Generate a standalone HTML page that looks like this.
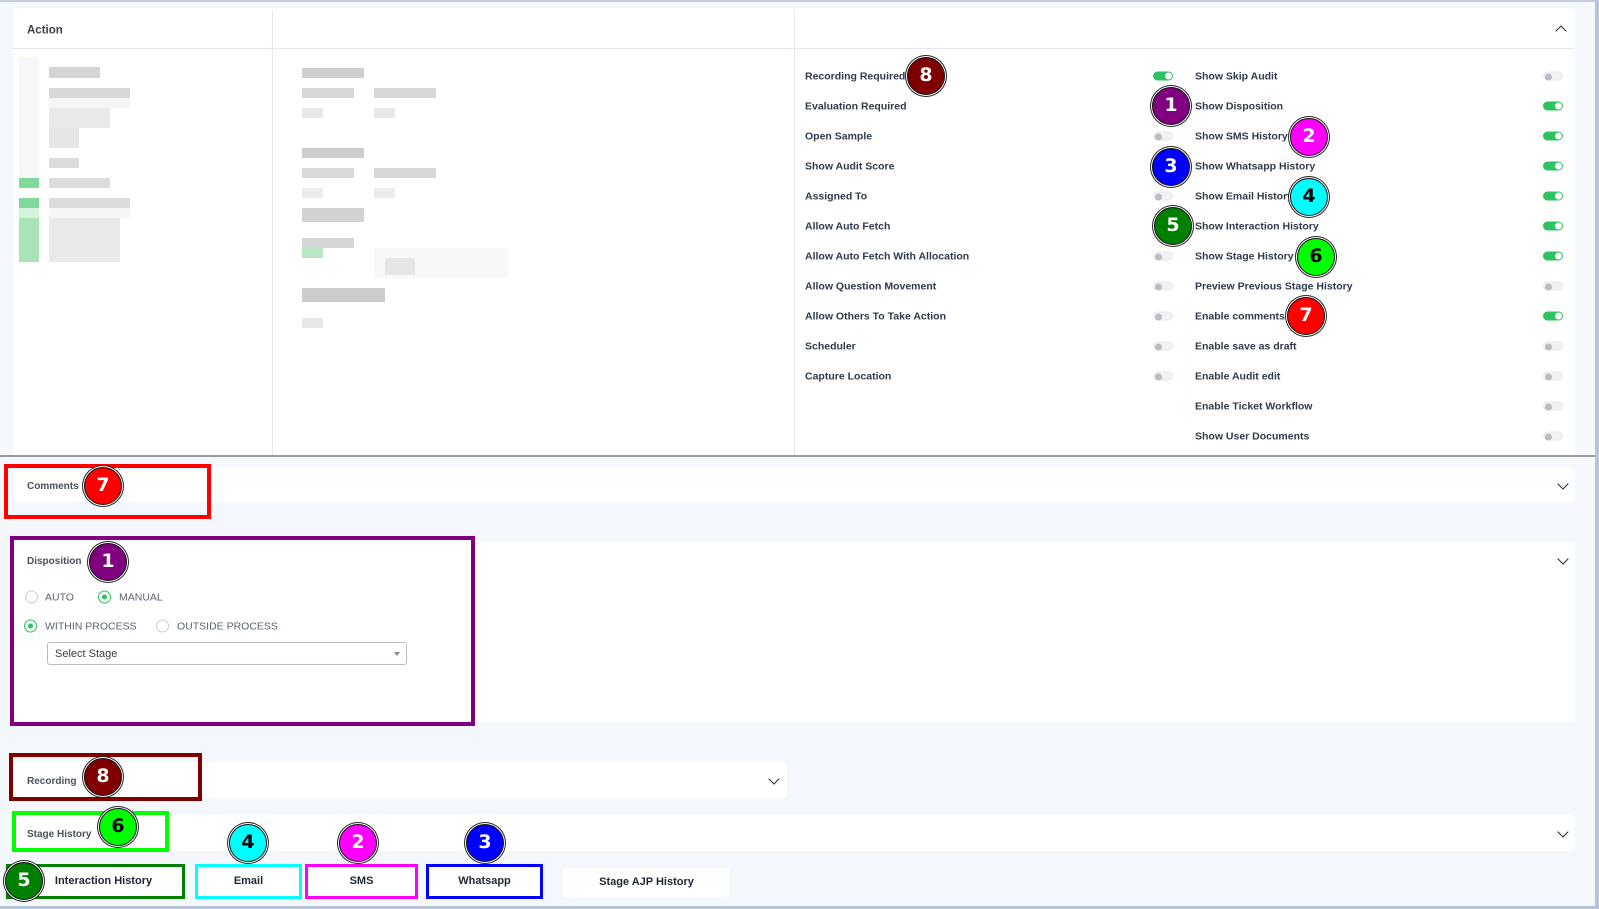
<!DOCTYPE html>
<html><head><meta charset="utf-8"><style>
*{margin:0;padding:0;box-sizing:border-box}
body{width:1599px;height:909px;background:#f4f7fb;position:relative;overflow:hidden;font-family:"Liberation Sans",sans-serif;color:#2f3a4a}
.a{position:absolute}
.card{position:absolute;background:#fff;border-radius:3px}
.lbl{position:absolute;font-size:10.5px;font-weight:bold;color:#2f3a4a;transform:translateY(-45%);white-space:nowrap}
.tg{position:absolute;width:20px;height:9px;border-radius:5px;transform:translateY(-50%)}
.tg.off{background:#f1f2f4;border:1px solid #e6e8eb}
.tg.off::after{content:"";position:absolute;left:1px;top:0.5px;width:7px;height:7px;border-radius:50%;background:#b9bcc1}
.tg.on{background:#2ec260}
.tg.on::after{content:"";position:absolute;right:1px;top:1px;width:7px;height:7px;border-radius:50%;background:#fff}
.b{position:absolute;width:38px;height:38px;border-radius:50%;border:1.5px solid #111;box-shadow:0 0 0 1px #fff,0 0 0 2px #222;transform:translate(-50%,-50%);color:#fff;font-weight:bold;font-size:19px;text-align:center;line-height:35px;font-family:"DejaVu Sans",sans-serif}
.bx{position:absolute;border:4px solid}
.g{position:absolute}
.chev{position:absolute;width:8px;height:8px;border-left:1.4px solid #222;border-top:1.4px solid #222}
.rad{position:absolute;width:13px;height:13px;border-radius:50%;border:1px solid #c8cdd5;transform:translateY(-50%);background:#fff}
.rad.on{border-color:#2ec260}
.rad.on::after{content:"";position:absolute;left:3px;top:3px;width:5px;height:5px;border-radius:50%;background:#2ec260}
.rt{position:absolute;font-size:10.5px;color:#5a6170;transform:translateY(-45%)}
.btn{position:absolute;background:#fff;font-size:11px;font-weight:bold;color:#1f2633;text-align:center;line-height:35px;height:35px}
</style></head><body>
<div class="a" style="left:0;top:0;width:1599px;height:2px;background:#c5cde0"></div>
<div class="a" style="left:1595px;top:0;width:4px;height:909px;background:#b8c4d8"></div>

<div class="card" style="left:13px;top:8px;width:1562px;height:448px;border-radius:3px 3px 0 0"></div>
<div class="a" style="left:0;top:455px;width:1595px;height:2px;background:#9a9a9a"></div>
<div class="a" style="left:13px;top:48px;width:1562px;height:1px;background:#e5e8ee"></div>
<div class="a" style="left:272px;top:11px;width:1px;height:444px;background:#e5e8ee"></div>
<div class="a" style="left:794px;top:11px;width:1px;height:444px;background:#e5e8ee"></div>
<div class="lbl" style="left:27px;top:30px;font-size:11.5px;color:#3a3f48">Action</div>
<div class="chev" style="left:1557px;top:27px;transform:rotate(45deg)"></div>

<div class="g" style="left:19px;top:57px;width:20px;height:121px;background:#f6f7f9"></div>
<div class="g" style="left:49px;top:67px;width:51px;height:11px;background:#d4d4d4"></div>
<div class="g" style="left:49px;top:88px;width:81px;height:10px;background:#d8d8d8"></div>
<div class="g" style="left:49px;top:98px;width:81px;height:10px;background:#f5f5f5"></div>
<div class="g" style="left:49px;top:108px;width:61px;height:20px;background:#eaeaea"></div>
<div class="g" style="left:49px;top:128px;width:30px;height:20px;background:#e6e6e6"></div>
<div class="g" style="left:49px;top:158px;width:30px;height:10px;background:#dcdcdc"></div>
<div class="g" style="left:49px;top:178px;width:61px;height:10px;background:#dcdcdc"></div>
<div class="g" style="left:49px;top:198px;width:81px;height:10px;background:#dcdcdc"></div>
<div class="g" style="left:49px;top:208px;width:81px;height:10px;background:#f6f6f6"></div>
<div class="g" style="left:49px;top:218px;width:71px;height:44px;background:#eaeaea"></div>
<div class="g" style="left:19px;top:178px;width:20px;height:10px;background:#7fd99a"></div>
<div class="g" style="left:19px;top:198px;width:20px;height:10px;background:#7fd99a"></div>
<div class="g" style="left:19px;top:208px;width:20px;height:10px;background:#d6f2dd"></div>
<div class="g" style="left:19px;top:218px;width:20px;height:44px;background:#a9e3b8"></div>
<div class="g" style="left:302px;top:68px;width:62px;height:10px;background:#cfcfcf"></div>
<div class="g" style="left:302px;top:88px;width:52px;height:10px;background:#d8d8d8"></div>
<div class="g" style="left:374px;top:88px;width:62px;height:10px;background:#d8d8d8"></div>
<div class="g" style="left:302px;top:108px;width:21px;height:10px;background:#e8e8e8"></div>
<div class="g" style="left:374px;top:108px;width:21px;height:10px;background:#e8e8e8"></div>
<div class="g" style="left:302px;top:148px;width:62px;height:10px;background:#cdcdcd"></div>
<div class="g" style="left:302px;top:168px;width:52px;height:10px;background:#dadada"></div>
<div class="g" style="left:374px;top:168px;width:62px;height:10px;background:#d8d8d8"></div>
<div class="g" style="left:302px;top:188px;width:21px;height:10px;background:#ececec"></div>
<div class="g" style="left:374px;top:188px;width:21px;height:10px;background:#ececec"></div>
<div class="g" style="left:302px;top:208px;width:62px;height:14px;background:#d2d2d2"></div>
<div class="g" style="left:302px;top:238px;width:52px;height:10px;background:#d6d6d6"></div>
<div class="g" style="left:302px;top:248px;width:21px;height:10px;background:#b8e8c4"></div>
<div class="g" style="left:374px;top:248px;width:134px;height:30px;background:#f7f8fa"></div>
<div class="g" style="left:385px;top:258px;width:30px;height:17px;background:#e6e6e6"></div>
<div class="g" style="left:302px;top:288px;width:83px;height:14px;background:#cccccc"></div>
<div class="g" style="left:302px;top:318px;width:21px;height:10px;background:#e8e8e8"></div>

<div class="lbl" style="left:805px;top:76px">Recording Required</div>
<div class="lbl" style="left:805px;top:106px">Evaluation Required</div>
<div class="lbl" style="left:805px;top:136px">Open Sample</div>
<div class="lbl" style="left:805px;top:166px">Show Audit Score</div>
<div class="lbl" style="left:805px;top:196px">Assigned To</div>
<div class="lbl" style="left:805px;top:226px">Allow Auto Fetch</div>
<div class="lbl" style="left:805px;top:256px">Allow Auto Fetch With Allocation</div>
<div class="lbl" style="left:805px;top:286px">Allow Question Movement</div>
<div class="lbl" style="left:805px;top:316px">Allow Others To Take Action</div>
<div class="lbl" style="left:805px;top:346px">Scheduler</div>
<div class="lbl" style="left:805px;top:376px">Capture Location</div>
<div class="tg on" style="left:1153px;top:76px"></div>
<div class="tg off" style="left:1153px;top:136px"></div>
<div class="tg off" style="left:1153px;top:196px"></div>
<div class="tg off" style="left:1153px;top:256px"></div>
<div class="tg off" style="left:1153px;top:286px"></div>
<div class="tg off" style="left:1153px;top:316px"></div>
<div class="tg off" style="left:1153px;top:346px"></div>
<div class="tg off" style="left:1153px;top:376px"></div>

<div class="lbl" style="left:1195px;top:76px">Show Skip Audit</div>
<div class="lbl" style="left:1195px;top:106px">Show Disposition</div>
<div class="lbl" style="left:1195px;top:136px">Show SMS History</div>
<div class="lbl" style="left:1195px;top:166px">Show Whatsapp History</div>
<div class="lbl" style="left:1195px;top:196px">Show Email History</div>
<div class="lbl" style="left:1195px;top:226px">Show Interaction History</div>
<div class="lbl" style="left:1195px;top:256px">Show Stage History</div>
<div class="lbl" style="left:1195px;top:286px">Preview Previous Stage History</div>
<div class="lbl" style="left:1195px;top:316px">Enable comments</div>
<div class="lbl" style="left:1195px;top:346px">Enable save as draft</div>
<div class="lbl" style="left:1195px;top:376px">Enable Audit edit</div>
<div class="lbl" style="left:1195px;top:406px">Enable Ticket Workflow</div>
<div class="lbl" style="left:1195px;top:436px">Show User Documents</div>
<div class="tg off" style="left:1543px;top:76px"></div>
<div class="tg on" style="left:1543px;top:106px"></div>
<div class="tg on" style="left:1543px;top:136px"></div>
<div class="tg on" style="left:1543px;top:166px"></div>
<div class="tg on" style="left:1543px;top:196px"></div>
<div class="tg on" style="left:1543px;top:226px"></div>
<div class="tg on" style="left:1543px;top:256px"></div>
<div class="tg off" style="left:1543px;top:286px"></div>
<div class="tg on" style="left:1543px;top:316px"></div>
<div class="tg off" style="left:1543px;top:346px"></div>
<div class="tg off" style="left:1543px;top:376px"></div>
<div class="tg off" style="left:1543px;top:406px"></div>
<div class="tg off" style="left:1543px;top:436px"></div>

<div class="b" style="left:926px;top:76px;background:#800000">8</div>
<div class="b" style="left:1171px;top:106px;background:#800080">1</div>
<div class="b" style="left:1309px;top:137px;background:#ff00ff">2</div>
<div class="b" style="left:1171px;top:167px;background:#0000ff">3</div>
<div class="b" style="left:1309px;top:197px;background:#00ffff;color:#000">4</div>
<div class="b" style="left:1173px;top:226px;background:#008000">5</div>
<div class="b" style="left:1316px;top:257px;background:#00ff00;color:#000">6</div>
<div class="b" style="left:1306px;top:316px;background:#ff0000">7</div>

<div class="card" style="left:13px;top:467px;width:1562px;height:35px"></div>
<div class="lbl" style="left:27px;top:486px;font-size:10px;color:#4a505c">Comments</div>
<div class="chev" style="left:1559px;top:480px;transform:rotate(225deg)"></div>
<div class="bx" style="left:4px;top:464px;width:207px;height:55px;border-color:#ff0000"></div>
<div class="b" style="left:103px;top:486px;background:#ff0000">7</div>

<div class="card" style="left:13px;top:542px;width:1562px;height:180px"></div>
<div class="lbl" style="left:27px;top:561px;font-size:10px;color:#4a505c">Disposition</div>
<div class="chev" style="left:1559px;top:555px;transform:rotate(225deg)"></div>
<div class="rad" style="left:25px;top:597px"></div><div class="rt" style="left:45px;top:597px">AUTO</div>
<div class="rad on" style="left:98px;top:597px"></div><div class="rt" style="left:119px;top:597px">MANUAL</div>
<div class="rad on" style="left:24px;top:626px"></div><div class="rt" style="left:45px;top:626px">WITHIN PROCESS</div>
<div class="rad" style="left:156px;top:626px"></div><div class="rt" style="left:177px;top:626px">OUTSIDE PROCESS</div>
<div class="a" style="left:47px;top:642px;width:360px;height:23px;border:1px solid #b8bcc4;border-radius:3px;font-size:11px;color:#3a3f48;line-height:22px;padding-left:7px">Select Stage</div>
<div class="a" style="left:394px;top:652px;width:0;height:0;border-left:3px solid transparent;border-right:3px solid transparent;border-top:4px solid #888"></div>
<div class="bx" style="left:10px;top:536px;width:465px;height:190px;border-color:#800080"></div>
<div class="b" style="left:108px;top:562px;background:#800080">1</div>

<div class="card" style="left:13px;top:762px;width:774px;height:36px"></div>
<div class="lbl" style="left:27px;top:781px;font-size:10px;color:#4a505c">Recording</div>
<div class="chev" style="left:770px;top:775px;transform:rotate(225deg)"></div>
<div class="bx" style="left:9px;top:753px;width:193px;height:48px;border-color:#800000"></div>
<div class="b" style="left:103px;top:777px;background:#800000">8</div>

<div class="card" style="left:13px;top:815px;width:1562px;height:36px"></div>
<div class="lbl" style="left:27px;top:834px;font-size:10px;color:#4a505c">Stage History</div>
<div class="chev" style="left:1559px;top:828px;transform:rotate(225deg)"></div>
<div class="bx" style="left:12px;top:811px;width:157px;height:41px;border-color:#00ff00"></div>
<div class="b" style="left:118px;top:827px;background:#00ff00;color:#000">6</div>

<div class="btn" style="left:6px;top:864px;width:179px;border:3px solid #008000;line-height:29px;padding-left:16px">Interaction History</div>
<div class="btn" style="left:195px;top:864px;width:107px;border:3px solid #00ffff;line-height:29px">Email</div>
<div class="btn" style="left:305px;top:864px;width:113px;border:3px solid #ff00ff;line-height:29px">SMS</div>
<div class="btn" style="left:426px;top:864px;width:117px;border:3px solid #0000ff;line-height:29px">Whatsapp</div>
<div class="btn" style="left:563px;top:868px;width:167px;height:29px;line-height:29px;border-radius:3px">Stage AJP History</div>
<div class="b" style="left:24px;top:881px;background:#008000">5</div>
<div class="b" style="left:248px;top:843px;background:#00ffff;color:#000">4</div>
<div class="b" style="left:358px;top:843px;background:#ff00ff">2</div>
<div class="b" style="left:485px;top:843px;background:#0000ff">3</div>
<div class="a" style="left:0;top:906px;width:1595px;height:3px;background:#b8c4d8"></div>
</body></html>
